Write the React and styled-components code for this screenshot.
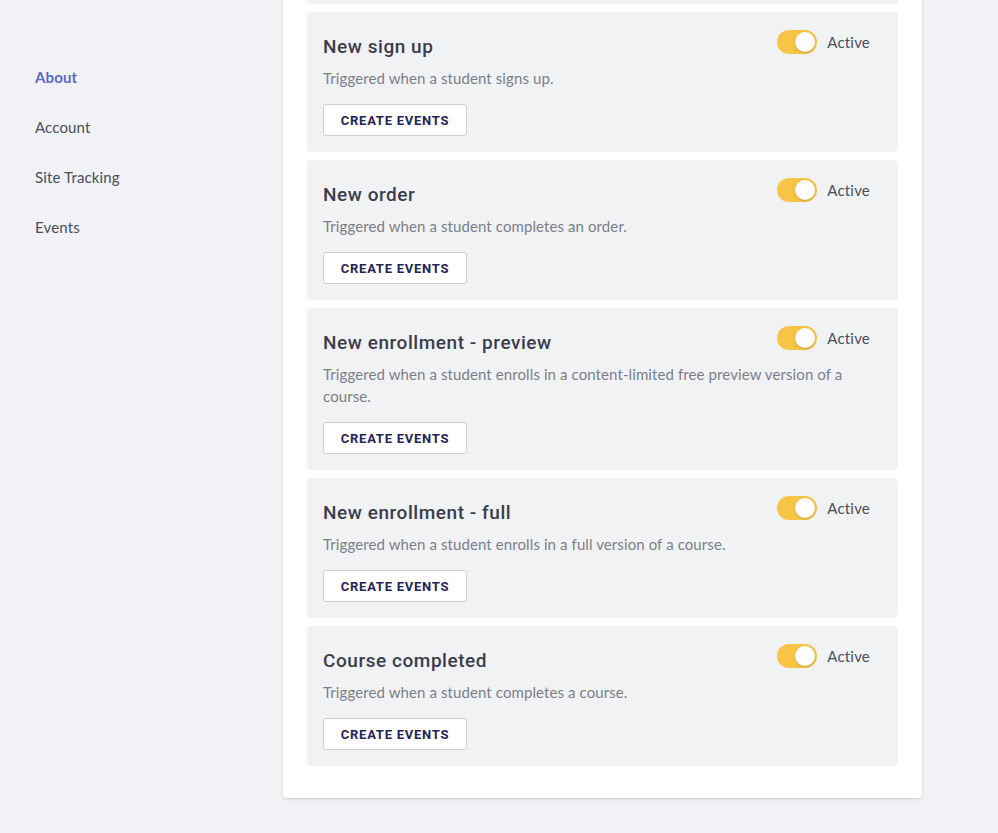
import React from "react";
import styled, { createGlobalStyle } from "styled-components";

const GlobalStyle = createGlobalStyle`
  html, body { margin: 0; padding: 0; background: #f1f2f5; }
  body { font-family: Lato, "Noto Sans", sans-serif; overflow: hidden; }
  * { box-sizing: border-box; }
`;

const Page = styled.div`
  display: flex;
  align-items: flex-start;
  height: 833px;
  overflow: hidden;
`;

const Sidebar = styled.nav`
  width: 283px;
  flex-shrink: 0;
  padding: 66px 0 0 35px;
  display: flex;
  flex-direction: column;
  gap: 28px;
`;

const NavItem = styled.a`
  font-size: 15px;
  line-height: 22px;
  letter-spacing: 0.15px;
  color: ${(p) => (p.$active ? "#5c68c2" : "#4a4d5b")};
  font-weight: ${(p) => (p.$active ? 700 : 400)};
  text-decoration: none;
  cursor: pointer;
`;

const Panel = styled.main`
  width: 639px;
  flex-shrink: 0;
  margin-top: -160px;
  background: #ffffff;
  border-radius: 4px;
  box-shadow: 0 1px 3px rgba(40, 42, 60, 0.18);
  padding: 24px 24px 32px;
  display: flex;
  flex-direction: column;
  gap: 8px;
`;

const Card = styled.section`
  background: #f1f2f4;
  border-radius: 4px;
  padding: 18px 16px 16px;
  min-height: ${(p) => (p.$stub ? "140px" : "auto")};
`;

const Header = styled.div`
  display: flex;
  justify-content: space-between;
  align-items: flex-start;
`;

const Title = styled.h3`
  margin: 5px 0 0;
  font-family: Roboto, "Noto Sans", sans-serif;
  font-size: 19px;
  line-height: 24px;
  font-weight: 500;
  color: #3b3d4d;
  letter-spacing: 0.55px;
`;

const Status = styled.div`
  display: flex;
  align-items: center;
  gap: 10px;
  margin-right: 12px;
`;

const Track = styled.span`
  position: relative;
  width: 40px;
  height: 24px;
  border-radius: 12px;
  background: ${(p) => (p.$on ? "#f8c445" : "#c9ccd4")};
  display: inline-block;
`;

const Knob = styled.span`
  position: absolute;
  top: 2px;
  left: ${(p) => (p.$on ? "18px" : "2px")};
  width: 20px;
  height: 20px;
  border-radius: 50%;
  background: #ffffff;
  box-shadow: 0 1px 2px rgba(120, 90, 20, 0.35);
`;

const StatusLabel = styled.span`
  font-size: 15px;
  line-height: 22px;
  letter-spacing: 0.2px;
  color: #4b4e5c;
`;

const Description = styled.p`
  margin: 8px 0 0;
  font-size: 15px;
  line-height: 22px;
  letter-spacing: 0.1px;
  color: #7b7e8a;
  max-width: 540px;
`;

const Button = styled.button`
  margin-top: 15px;
  height: 32px;
  width: 144px;
  background: #ffffff;
  border: 1px solid #c9cbd3;
  border-radius: 3px;
  font-family: Roboto, "Noto Sans", sans-serif;
  font-size: 13px;
  font-weight: 700;
  letter-spacing: 0.75px;
  color: #262455;
  cursor: pointer;
  padding: 0;
`;

const Toggle = ({ on }) => (
  <Status>
    <Track $on={on}>
      <Knob $on={on} />
    </Track>
    <StatusLabel>Active</StatusLabel>
  </Status>
);

const events = [
  { title: "New sign up", desc: "Triggered when a student signs up." },
  { title: "New order", desc: "Triggered when a student completes an order." },
  {
    title: "New enrollment - preview",
    desc: "Triggered when a student enrolls in a content-limited free preview version of a course.",
  },
  { title: "New enrollment - full", desc: "Triggered when a student enrolls in a full version of a course." },
  { title: "Course completed", desc: "Triggered when a student completes a course." },
];

export default function App() {
  return (
    <>
      <GlobalStyle />
      <Page>
        <Sidebar>
          <NavItem $active>About</NavItem>
          <NavItem>Account</NavItem>
          <NavItem>Site Tracking</NavItem>
          <NavItem>Events</NavItem>
        </Sidebar>
        <Panel>
          <Card $stub aria-hidden="true" />
          {events.map((e) => (
            <Card key={e.title}>
              <Header>
                <Title>{e.title}</Title>
                <Toggle on />
              </Header>
              <Description>{e.desc}</Description>
              <Button>CREATE EVENTS</Button>
            </Card>
          ))}
        </Panel>
      </Page>
    </>
  );
}
